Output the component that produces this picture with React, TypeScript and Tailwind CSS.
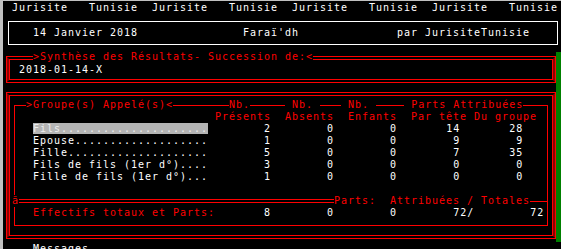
type Seg = { c: number; t: string; k?: string };

const Line = ({ segs, className = '' }: { segs: Seg[]; className?: string }) => {
  const out: React.ReactNode[] = [];
  let pos = 0;
  segs.forEach((s, i) => {
    if (s.c > pos) out.push(<span key={'p' + i}>{' '.repeat(s.c - pos)}</span>);
    out.push(
      <span key={i} className={s.k}>
        {s.t}
      </span>
    );
    pos = s.c + s.t.length;
  });
  return <div className={'h-[12px] whitespace-pre ' + className}>{out}</div>;
};

// right-aligned number ending at column `end`
const num = (end: number, v: string, k?: string): Seg => ({ c: end - v.length + 1, t: v, k });

// double red frame: horizontal gaps are black, vertical gaps dark red
const DBox = ({ className, children }: { className: string; children: React.ReactNode }) => (
  <div className={'border border-[#ff0000] ' + className}>
    <div className="h-full border-y-2 border-y-black border-x-2 border-x-[#8b0000]">
      <div className="h-full border border-[#ff0000]">{children}</div>
    </div>
  </div>
);

const groups = [
  ['Fils', '2', '0', '0', '14', '28'],
  ['Epouse', '1', '0', '0', '9', '9'],
  ['Fille', '5', '0', '0', '7', '35'],
  ['Fils de fils (1er d°)', '3', '0', '0', '0', '0'],
  ['Fille de fils (1er d°)', '1', '0', '0', '0', '0'],
];

export default function App() {
  return (
    <div className="w-[561px] h-[249px] overflow-hidden bg-black border-l-[3px] border-t border-[#c0c0c0] font-['DejaVu_Sans_Mono',monospace] text-[10px] leading-[12px] tracking-[0.98px] text-white">
      {/* Banner */}
      <Line
        className="mt-[1px] pl-[2px]"
        segs={[
          { c: 1, t: 'Jurisite   Tunisie  Jurisite   Tunisie  Jurisite   Tunisie  Jurisite   Tunisie' },
        ]}
      />

      {/* Date / title bar */}
      <div className="mt-[7px] ml-[5px] w-[550px] h-[24px] border border-white flex items-center">
        <Line
          className="-ml-[4px]"
          segs={[
            { c: 4, t: '14 Janvier 2018' },
            { c: 34, t: "Faraï'dh" },
            { c: 56, t: 'par JurisiteTunisie' },
          ]}
        />
      </div>

      <div className="flex">
        <div className="w-[553px]">
          {/* Synthèse */}
          <DBox className="mt-[11px] ml-[3px] w-[550px] h-[27px]">
            <Line
              className="-mt-[9px] -ml-[5px] text-[#ff0000]"
              segs={[{ c: 4, t: '>Synthèse des Résultats- Succession de:<', k: 'bg-black inline-block h-[12px]' }]}
            />
            <Line className="mt-[1px] -ml-[5px]" segs={[{ c: 2, t: '2018-01-14-X' }]} />
          </DBox>

          {/* Groupes */}
          <DBox className="mt-[9px] ml-[3px] w-[550px] h-[147px]">
            <div className="mt-[9px] ml-[4px] w-[534px] h-[121px] border border-[#ff0000]">
              <Line
                className="-mt-[7px] -ml-[10px] text-[#ff0000]"
                segs={[
                  { c: 3, t: '>Groupe(s) Appelé(s)<', k: 'bg-black' },
                  { c: 32, t: 'Nb.', k: 'bg-black' },
                  { c: 40, t: ' Nb. ', k: 'bg-black' },
                  { c: 48, t: ' Nb. ', k: 'bg-black' },
                  { c: 57, t: ' Parts Attribuées', k: 'bg-black' },
                ]}
              />
              <Line
                className="-ml-[10px] text-[#ff0000]"
                segs={[
                  { c: 30, t: 'Présents' },
                  { c: 40, t: 'Absents' },
                  { c: 49, t: 'Enfants' },
                  { c: 58, t: 'Par tête Du groupe' },
                ]}
              />
              {groups.map((g, i) => (
                <Line
                  key={g[0]}
                  className="-ml-[10px]"
                  segs={[
                    {
                      c: 4,
                      t: g[0] + '.'.repeat(25 - g[0].length),
                      k: i === 0 ? 'bg-[#b4b4b4] text-[#ededed]' : undefined,
                    },
                    num(37, g[1]),
                    num(46, g[2]),
                    num(55, g[3]),
                    num(64, g[4]),
                    num(73, g[5]),
                  ]}
                />
              ))}
              <div className="h-[12px]" />
              <div className="-ml-[10px] h-[12px] flex items-center text-[#ff0000]">
                <div className="w-[7px]" />
                <span className="w-[7px] h-[12px] bg-black">ã</span>
                <div className="w-[315px] h-[4px] border-y border-[#ff0000]" />
                <span className="whitespace-pre">Parts:  Attribuées / Totales</span>
                <div className="flex-1 border-t border-[#ff0000]" />
              </div>
              <Line
                className="-ml-[10px]"
                segs={[
                  { c: 4, t: 'Effectifs totaux et Parts:', k: 'text-[#ff0000]' },
                  num(37, '8'),
                  num(46, '0'),
                  num(55, '0'),
                  { c: 64, t: '72/' },
                  { c: 75, t: '72' },
                ]}
              />
            </div>
          </DBox>
        </div>
        <div className="mt-[7px] w-[5px] h-[190px] bg-[#008000]" />
      </div>

      <Line className="mt-[1px] pl-[2px]" segs={[{ c: 4, t: 'Messages' }]} />
    </div>
  );
}
